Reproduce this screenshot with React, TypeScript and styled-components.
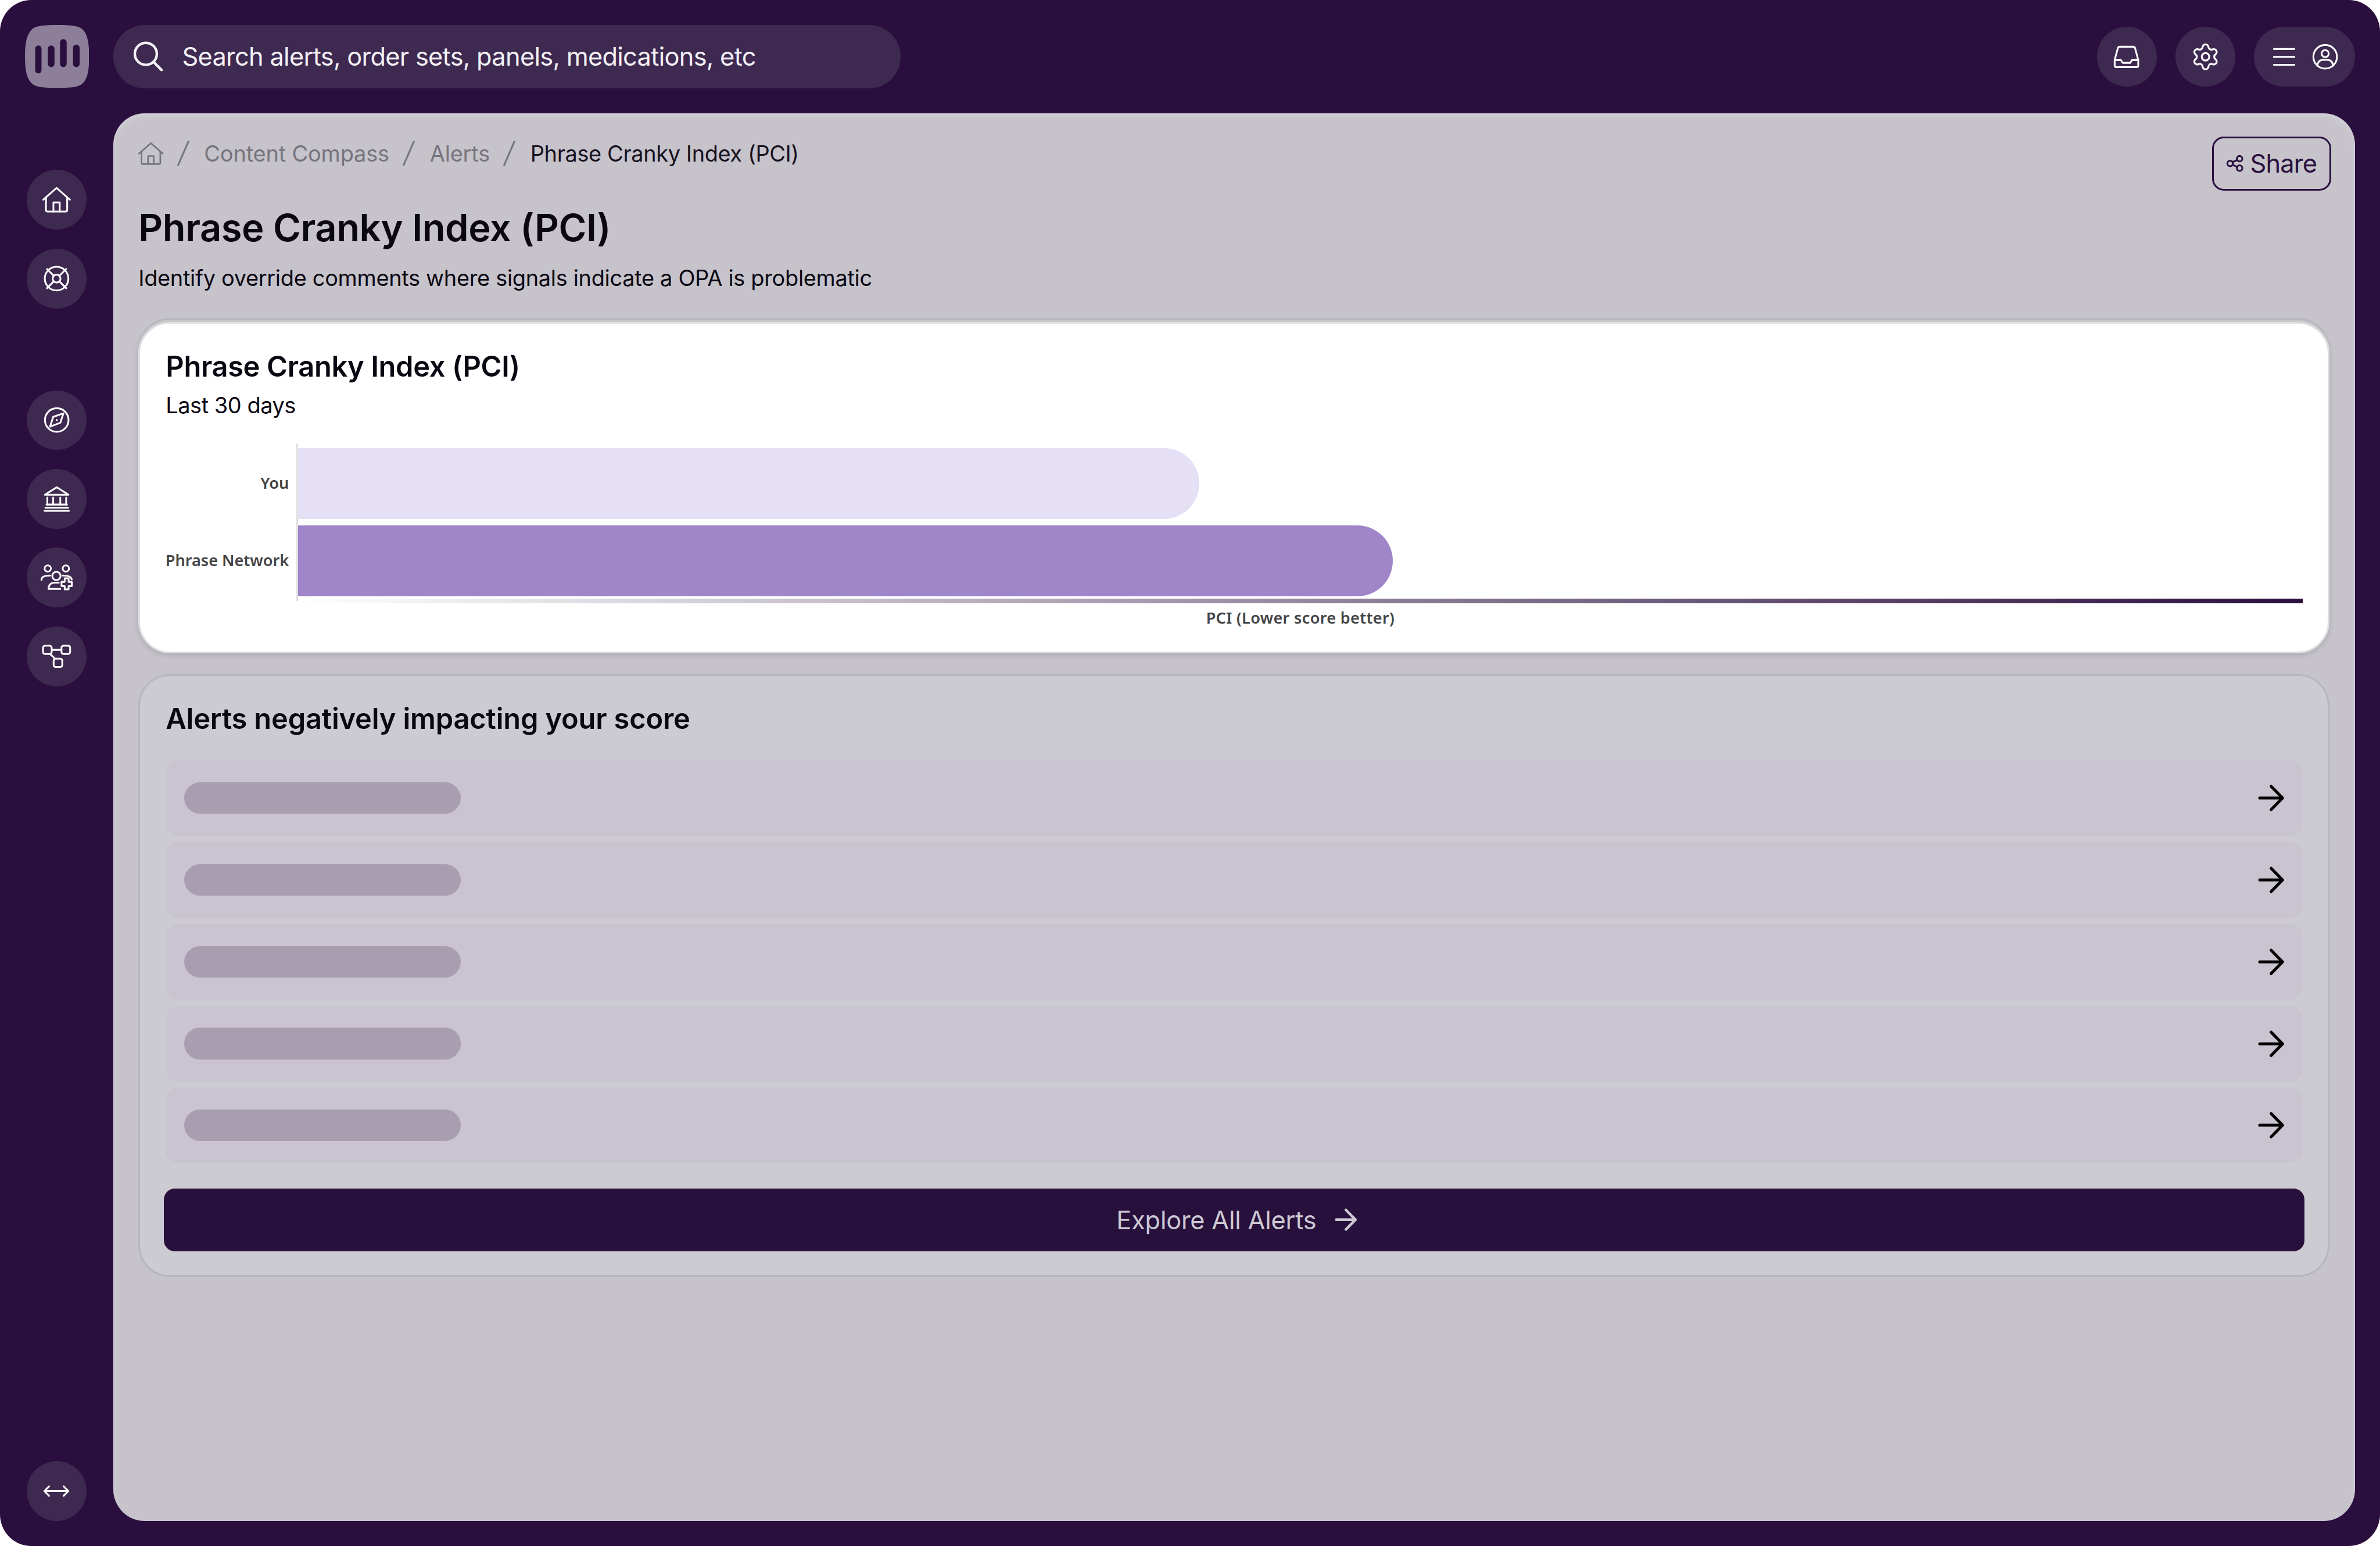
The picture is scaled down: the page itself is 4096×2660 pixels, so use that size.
import React from "react"
import styled, { createGlobalStyle } from "styled-components"
import { Settings } from "lucide-react"

// everything below was measured on the 6048 wide reference
const s = (n: number) => `${n * 0.677}px`

const GlobalStyle = createGlobalStyle`
  html, body {
    margin: 0;
    padding: 0;
    background: #fff;
  }
  * {
    box-sizing: border-box;
  }
`

const Frame = styled.div`
  width: 4096px;
  height: 2660px;
  background: #2a0f3e;
  border-radius: ${s(80)};
  display: flex;
  flex-direction: column;
  font-family: Inter, "Liberation Sans", sans-serif;
  overflow: hidden;
`

const TopBar = styled.header`
  height: ${s(288)};
  flex: none;
  display: flex;
  align-items: flex-start;
  padding: ${s(64)} ${s(64)} 0 ${s(63)};
`

const Logo = styled.svg`
  width: ${s(163)};
  height: ${s(160)};
  flex: none;
  margin-right: ${s(62)};
`

const SearchBar = styled.div`
  width: ${s(2002)};
  height: ${s(160)};
  border-radius: ${s(80)};
  background: #3e2950;
  display: flex;
  align-items: center;
  padding-left: ${s(52)};
  gap: ${s(50)};
  color: #f3f1f5;
  font-size: ${s(64)};
  letter-spacing: -0.016em;
`

const TopActions = styled.div`
  margin-left: auto;
  height: ${s(160)};
  display: flex;
  align-items: center;
  gap: ${s(48)};
`

const RoundButton = styled.button`
  width: ${s(152)};
  height: ${s(152)};
  flex: none;
  border: 0;
  padding: 0;
  border-radius: 50%;
  background: #3e2950;
  color: #fff;
  display: flex;
  align-items: center;
  justify-content: center;
`

const MenuPill = styled.button`
  width: ${s(256)};
  height: ${s(152)};
  border: 0;
  border-radius: ${s(76)};
  background: #3e2950;
  color: #fff;
  display: flex;
  align-items: center;
  padding: 0 0 0 ${s(48)};
  gap: ${s(44)};
`

const Body = styled.div`
  flex: 1;
  min-height: 0;
  display: flex;
`

const SideNav = styled.nav`
  width: ${s(288)};
  flex: none;
  display: flex;
  flex-direction: column;
  align-items: center;
  padding: ${s(144)} 0 ${s(64)};
`

const NavGroup = styled.div`
  display: flex;
  flex-direction: column;
  gap: ${s(48)};
  margin-bottom: ${s(208)};
`

const NavBottom = styled.div`
  margin-top: auto;
`

const Main = styled.main`
  flex: 1;
  min-width: 0;
  margin: 0 ${s(64)} ${s(64)} 0;
  padding: ${s(59)} ${s(64)} 0;
  border-radius: ${s(80)};
  background: #c6c3cb;
  box-shadow: inset 0 ${s(8)} ${s(14)} rgba(255, 255, 255, 0.22);
`

const PageHeader = styled.div`
  display: flex;
  justify-content: space-between;
  align-items: flex-start;
`

const Crumbs = styled.div`
  height: ${s(86)};
  display: flex;
  align-items: center;
  color: #76747c;
  font-size: ${s(56)};
  letter-spacing: -0.004em;
`

const CrumbSlash = styled.svg`
  width: ${s(34)};
  height: ${s(64)};
  margin: 0 ${s(36)} 0 ${s(33)};
  flex: none;
`

const CrumbCurrent = styled.span`
  color: #17111e;
  letter-spacing: -0.01em;
`

const PageTitle = styled.h1`
  margin: ${s(73)} 0 0;
  font-size: ${s(96)};
  line-height: ${s(144)};
  font-weight: 600;
  color: #0b0712;
  letter-spacing: -0.0065em;
`

const PageDesc = styled.p`
  margin: ${s(16)} 0 0;
  font-size: ${s(56)};
  line-height: ${s(80)};
  color: #0b0712;
  letter-spacing: -0.008em;
`

const ShareButton = styled.button`
  width: ${s(303)};
  height: ${s(137)};
  margin-right: ${s(-4)};
  flex: none;
  background: transparent;
  border: 3px solid #2a0f3e;
  border-radius: ${s(30)};
  color: #2a0f3e;
  font-family: inherit;
  font-size: ${s(64)};
  display: flex;
  align-items: center;
  justify-content: center;
  gap: ${s(18)};
  padding: 0;
  letter-spacing: -0.018em;
`

const ChartCard = styled.section`
  margin-top: ${s(72)};
  height: ${s(842)};
  background: #fff;
  border: 3px solid #dfdfe1;
  border-radius: ${s(80)};
  padding: ${s(47)} ${s(64)} 0 ${s(65)};
  box-shadow:
    0 ${s(-5)} 0 0 #c9c8cc,
    0 ${s(-10)} 0 0 #b8b6bd,
    0 ${s(4)} ${s(14)} rgba(0, 0, 0, 0.14);
`

const CardTitle = styled.h2`
  margin: 0 0 ${s(-2)};
  padding-top: ${s(2)};
  font-size: ${s(72)};
  line-height: ${s(120)};
  font-weight: 600;
  color: #0b0712;
  letter-spacing: -0.0065em;
`

const CardSub = styled.p`
  margin: 0;
  font-size: ${s(56)};
  line-height: ${s(80)};
  color: #0b0712;
  letter-spacing: -0.012em;
`

const ChartArea = styled.div`
  margin-top: ${s(57)};
  display: flex;
`

const ChartLabels = styled.div`
  width: ${s(332)};
  flex: none;
  padding: ${s(11)} ${s(19)} 0 0;
  display: flex;
  flex-direction: column;
  gap: ${s(16)};
`

const ChartLabel = styled.div`
  height: ${s(180)};
  display: flex;
  align-items: center;
  justify-content: flex-end;
  white-space: nowrap;
  font-family: "Noto Sans", sans-serif;
  font-size: ${s(40)};
  font-weight: 600;
  color: #444;
`

const Plot = styled.div`
  flex: 1;
  min-width: 0;
`

const Bars = styled.div`
  height: ${s(401)};
  border-left: 3px solid #e0e0e0;
  padding-top: ${s(13)};
  display: flex;
  flex-direction: column;
  gap: ${s(16)};
`

const Bar = styled.div<{ $color: string }>`
  height: ${s(180)};
  flex: none;
  background: ${(p) => p.$color};
  border-radius: 0 ${s(90)} ${s(90)} 0;
`

const Baseline = styled.div`
  height: ${s(12)};
  margin: ${s(-6)} 0 0 ${s(4)};
  background: linear-gradient(90deg, #fff, #2a0f3e);
`

const AxisLabel = styled.div`
  margin: ${s(8)} 0 0 ${s(4)};
  text-align: center;
  font-family: "Noto Sans", sans-serif;
  font-size: ${s(40)};
  line-height: ${s(60)};
  font-weight: 600;
  color: #444;
  letter-spacing: 0.012em;
`

const AlertsCard = styled.section`
  margin-top: ${s(53)};
  background: #cdcbd2;
  border: 3px solid #b8b6bd;
  border-radius: ${s(80)};
  padding: ${s(47)} ${s(64)} ${s(60)};
`

const AlertsHeading = styled.h2`
  margin: 0 0 ${s(46)};
  padding: ${s(2)} 0 0 ${s(1)};
  font-size: ${s(72)};
  line-height: ${s(120)};
  font-weight: 600;
  color: #0b0712;
  letter-spacing: -0.003em;
`

const AlertList = styled.div`
  display: flex;
  flex-direction: column;
  gap: ${s(16)};
`

const AlertRow = styled.div`
  height: ${s(192)};
  border-radius: ${s(32)};
  background: #c9c4d0;
  display: flex;
  align-items: center;
  justify-content: space-between;
  padding: 0 ${s(48)};
`

const Skeleton = styled.div`
  width: ${s(703)};
  height: ${s(80)};
  border-radius: ${s(40)};
  background: #a89eb0;
`

const ExploreButton = styled.button`
  width: calc(100% + ${s(8)});
  height: ${s(160)};
  margin: ${s(64)} ${s(-4)} 0;
  border: 0;
  border-radius: ${s(28)};
  padding: 0 0 0 ${s(12)};
  background: #27103c;
  color: #cdc9d3;
  font-family: inherit;
  font-size: ${s(64)};
  letter-spacing: -0.005em;
  display: flex;
  align-items: center;
  justify-content: center;
  gap: ${s(48)};
`

const Glyph = styled.svg<{ $w: number; $h: number }>`
  width: ${(p) => s(p.$w)};
  height: ${(p) => s(p.$h)};
  flex: none;
  fill: none;
  stroke: currentColor;
  stroke-width: 4.5;
  stroke-linecap: round;
  stroke-linejoin: round;
  overflow: visible;
`

const HomeIcon = ({ w = 72, h = 64 }: { w?: number; h?: number }) => (
  <Glyph $w={w} $h={h} viewBox="0 0 72 64">
    <path d="M2 32 36 2l34 30" />
    <path d="M9 27v31q0 4 4 4h46q4 0 4-4V27" />
    <path d="M28 62V39h16v23" />
  </Glyph>
)

const ArrowIcon = ({ w = 64, h = 65, sw = 7.5 }: { w?: number; h?: number; sw?: number }) => (
  <Glyph $w={w} $h={h} viewBox="0 0 64 65" style={{ strokeWidth: sw }}>
    <path d="M3 32.5h58M32 3l29 29.5L32 62" />
  </Glyph>
)

const navIcons = {
  compass: (
    <Glyph $w={64} $h={64} viewBox="0 0 64 64">
      <circle cx="32" cy="32" r="30" />
      <path d="M49 15 23 24l-8 25 26-10z" />
      <circle cx="32" cy="32" r="2.5" fill="currentColor" stroke="none" />
    </Glyph>
  ),
  bank: (
    <Glyph $w={64} $h={64} viewBox="0 0 64 64">
      <path d="M2 21 32 2l30 19z" />
      <path d="M8 28v18M23 28v18M41 28v18M56 28v18" />
      <path d="M6 46h52M3 54h58M1 62h62" />
    </Glyph>
  ),
  users: (
    <Glyph $w={80} $h={63} viewBox="0 0 80 63">
      <circle cx="18" cy="9" r="8" />
      <circle cx="64" cy="9" r="8" />
      <circle cx="40" cy="28" r="10.5" />
      <path d="M2 38c0-8 8-11 22-11M56 27c14 0 22 3 23 10" />
      <path d="M50 61H20c0-10 6-16 16-16h10" />
      <path d="M61 34h10v9h8v11h-8v8H61v-8h-8V43h8z" />
    </Glyph>
  ),
  graph: (
    <Glyph $w={72} $h={57} viewBox="0 0 72 57">
      <rect x="1.5" y="1.5" width="22" height="21" rx="5" />
      <rect x="48.5" y="1.5" width="22" height="21" rx="5" />
      <rect x="28.5" y="34.5" width="22" height="21" rx="5" />
      <path d="M24 12h24M20 23l12 11" />
    </Glyph>
  ),
}

const App: React.FC = () => {
  const rows = [0, 1, 2, 3, 4]

  return (
    <Frame>
      <GlobalStyle />
      <TopBar>
        <Logo viewBox="0 0 163 160">
          <path
            fill="#8d7f99"
            d="M82 0c42 0 58 3 67 14 10 12 14 30 14 66s-4 54-14 66c-9 11-25 14-67 14s-58-3-67-14C5 134 0 116 0 80s5-54 15-66C24 3 40 0 82 0z"
          />
          <g fill="#2a0f3e">
            <rect x="26" y="52" width="16" height="71" rx="8" />
            <rect x="58" y="52" width="17" height="55" rx="8.5" />
            <rect x="89" y="36" width="17" height="71" rx="8.5" />
            <rect x="122" y="50" width="17" height="57" rx="8.5" />
          </g>
        </Logo>
        <SearchBar>
          <Glyph $w={73} $h={71} viewBox="0 0 73 71" style={{ strokeWidth: 6.5 }}>
            <circle cx="31" cy="29" r="28" />
            <path d="m51 50 20 20" />
          </Glyph>
          Search alerts, order sets, panels, medications, etc
        </SearchBar>
        <TopActions>
          <RoundButton>
            <Glyph $w={64} $h={56} viewBox="0 0 64 56">
              <path d="M2 36 10 6q1-4 5-4h34q4 0 5 4l8 30v14q0 4-4 4H6q-4 0-4-4z" />
              <path d="M2 36h16l4 7h20l4-7h16" />
            </Glyph>
          </RoundButton>
          <RoundButton>
            <Settings size={76 * 0.677} strokeWidth={1.5} />
          </RoundButton>
          <MenuPill>
            <Glyph $w={56} $h={44} viewBox="0 0 56 44">
              <path d="M2 2h52M2 22h52M2 42h52" />
            </Glyph>
            <Glyph $w={64} $h={64} viewBox="0 0 64 64">
              <circle cx="32" cy="32" r="30" />
              <circle cx="32" cy="24" r="9" />
              <path d="M12 55c1-10 7-15 15-15h10c8 0 14 5 15 15" />
            </Glyph>
          </MenuPill>
        </TopActions>
      </TopBar>
      <Body>
        <SideNav>
          <NavGroup>
            <RoundButton>
              <HomeIcon />
            </RoundButton>
            <RoundButton>
              <Glyph $w={72} $h={72} viewBox="0 0 72 72">
                <circle cx="36" cy="36" r="30" />
                <circle cx="36" cy="36" r="10" />
                <path d="M11.5 11.5 29 29M60.5 11.5 43 29M11.5 60.5 29 43M60.5 60.5 43 43" />
              </Glyph>
            </RoundButton>
          </NavGroup>
          <NavGroup>
            <RoundButton>{navIcons.compass}</RoundButton>
            <RoundButton>{navIcons.bank}</RoundButton>
            <RoundButton>{navIcons.users}</RoundButton>
            <RoundButton>{navIcons.graph}</RoundButton>
          </NavGroup>
          <NavBottom>
            <RoundButton>
              <Glyph $w={65} $h={28} viewBox="0 0 65 28">
                <path d="M3 14h59M14 2 2 14l12 12M51 2l12 12-12 12" />
              </Glyph>
            </RoundButton>
          </NavBottom>
        </SideNav>
        <Main>
          <PageHeader>
            <div>
              <Crumbs>
                <HomeIcon w={64} h={57} />
                <CrumbSlash viewBox="0 0 34 64">
                  <path d="M30 2 4 62" stroke="#76747c" strokeWidth="4.5" strokeLinecap="round" />
                </CrumbSlash>
                Content Compass
                <CrumbSlash viewBox="0 0 34 64">
                  <path d="M30 2 4 62" stroke="#76747c" strokeWidth="4.5" strokeLinecap="round" />
                </CrumbSlash>
                Alerts
                <CrumbSlash viewBox="0 0 34 64">
                  <path d="M30 2 4 62" stroke="#76747c" strokeWidth="4.5" strokeLinecap="round" />
                </CrumbSlash>
                <CrumbCurrent>Phrase Cranky Index (PCI)</CrumbCurrent>
              </Crumbs>
              <PageTitle>Phrase Cranky Index (PCI)</PageTitle>
              <PageDesc>Identify override comments where signals indicate a OPA is problematic</PageDesc>
            </div>
            <ShareButton>
              <Glyph $w={42} $h={42} viewBox="0 0 42 42">
                <circle cx="9" cy="21" r="7" />
                <circle cx="33" cy="9" r="7" />
                <circle cx="33" cy="33" r="7" />
                <path d="m15 18 12-6M15 24l12 6" />
              </Glyph>
              Share
            </ShareButton>
          </PageHeader>

          <ChartCard>
            <CardTitle>Phrase Cranky Index (PCI)</CardTitle>
            <CardSub>Last 30 days</CardSub>
            <ChartArea>
              <ChartLabels>
                <ChartLabel>You</ChartLabel>
                <ChartLabel>Phrase Network</ChartLabel>
              </ChartLabels>
              <Plot>
                <Bars>
                  <Bar $color="#e5e0f5" style={{ width: "44.95%" }} />
                  <Bar $color="#a085c9" style={{ width: "54.6%" }} />
                </Bars>
                <Baseline />
                <AxisLabel>PCI (Lower score better)</AxisLabel>
              </Plot>
            </ChartArea>
          </ChartCard>

          <AlertsCard>
            <AlertsHeading>Alerts negatively impacting your score</AlertsHeading>
            <AlertList>
              {rows.map((row) => (
                <AlertRow key={row}>
                  <Skeleton />
                  <ArrowIcon />
                </AlertRow>
              ))}
            </AlertList>
            <ExploreButton>
              Explore All Alerts
              <ArrowIcon w={54} h={55} sw={8} />
            </ExploreButton>
          </AlertsCard>
        </Main>
      </Body>
    </Frame>
  )
}

export default App
